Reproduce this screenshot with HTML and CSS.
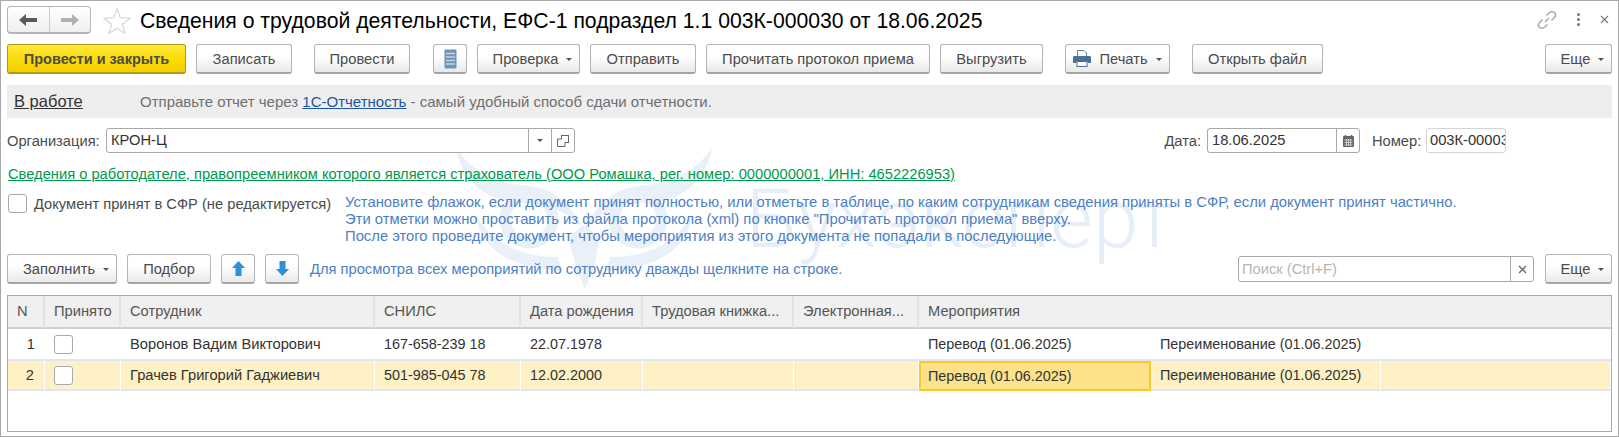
FILE: index.html
```html
<!DOCTYPE html>
<html>
<head>
<meta charset="utf-8">
<title>Сведения о трудовой деятельности</title>
<link rel="stylesheet" href="styles.css">
</head>
<body>
<div class="window">

    <!-- watermark -->
    <div class="wm">
        <svg class="wm-owl" viewBox="0 0 270 145" width="270" height="145">
            <path d="M6 3C12 36 36 58 76 58C98 58 116 66 133 84C118 52 98 42 72 40C44 38 22 26 6 3Z"/>
            <path d="M262 3C256 36 232 58 192 58C170 58 152 66 135 84C150 52 170 42 196 40C224 38 246 26 262 3Z"/>
            <circle cx="79" cy="74" r="24" fill="none" stroke-width="11"/>
            <circle cx="188" cy="74" r="24" fill="none" stroke-width="11"/>
            <path d="M118 92L134 80L150 92L144 122L135 144L126 122Z"/>
            <path d="M26 70C30 104 62 124 112 126L108 112C70 112 42 98 26 70Z"/>
            <path d="M242 70C238 104 206 124 156 126L160 112C198 112 226 98 242 70Z"/>
        </svg>
        <span class="wm-text">Бухэксперт</span>
    </div>

    <div class="titlebar">
        <div class="nav">
            <span class="nav-btn">
                <svg width="18" height="12" viewBox="0 0 18 12"><path d="M0 6L7 0V4H18V8H7V12Z" fill="#5a5a5a"/></svg>
            </span>
            <span class="nav-btn">
                <svg width="18" height="12" viewBox="0 0 18 12"><path d="M18 6L11 0V4H0V8H11V12Z" fill="#b0b0b0"/></svg>
            </span>
        </div>
        <svg class="star" width="28" height="26" viewBox="0 0 28 26"><path d="M14 1L17.4 9.7L27 10.2L19.5 16.2L22 25.3L14 20.2L6 25.3L8.5 16.2L1 10.2L10.6 9.7Z" fill="#fff" stroke="#d6d6d6" stroke-width="1.2"/></svg>
        <h1 class="title">Сведения о трудовой деятельности, ЕФС-1 подраздел 1.1 003К-000030 от 18.06.2025</h1>
        <div class="win-tools">
            <svg width="20" height="20" viewBox="0 0 20 20" fill="none" stroke="#a8a8a8" stroke-width="1.5"><path d="M8 12L12 8"/><path d="M9.5 5.5L12 3C14 1.2 16.5 1.5 17.8 3S18.8 6.200 17 8L14.500 10.500"/><path d="M10.500 14.500L8 17C6 18.800 3.500 18.500 2.200 17S1.200 13.800 3 12L5.500 9.500"/></svg>
            <span class="kebab"><i></i><i></i><i></i></span>
            <svg width="9" height="9" viewBox="0 0 9 9" stroke="#777" stroke-width="1.100"><path d="M1 1L8 8M8 1L1 8"/></svg>
        </div>
    </div>

    <div class="toolbar">
        <a class="btn btn-main">Провести и закрыть</a>
        <a class="btn btn-save">Записать</a>
        <a class="btn btn-post">Провести</a>
        <a class="btn btn-list">
            <svg width="13" height="20" viewBox="0 0 13 20"><rect x="0.500" y="0.500" width="12" height="19" rx="1" fill="#6e93b5"/><path d="M2 4.500H11M2 8H11M2 11.500H11M2 15H11" stroke="#c4d8e8" stroke-width="1.500"/></svg>
        </a>
        <a class="btn btn-check">Проверка<i class="caret"></i></a>
        <a class="btn btn-send">Отправить</a>
        <a class="btn btn-read">Прочитать протокол приема</a>
        <a class="btn btn-upload">Выгрузить</a>
        <a class="btn btn-print">
            <svg width="18" height="17" viewBox="0 0 18 17"><path d="M4.500 6V.5H11L13.500 3V6" fill="#fff" stroke="#6b7f93"/><path d="M0 7.500C0 6.500 .8 6 1.500 6H16.500C17.200 6 18 6.500 18 7.500V13H14.500V11H3.500V13H0Z" fill="#4d7096"/><rect x="4" y="11.500" width="10" height="5" fill="#fff" stroke="#4d7096"/></svg>
            Печать<i class="caret"></i>
        </a>
        <a class="btn btn-open">Открыть файл</a>
        <a class="btn btn-more">Еще<i class="caret"></i></a>
    </div>

    <div class="band">
        <a class="status">В работе</a>
        <span class="promo">Отправьте отчет через <a class="promo-link">1С-Отчетность</a> - самый удобный способ сдачи отчетности.</span>
    </div>

    <div class="org-row">
        <label class="lbl lbl-org">Организация:</label>
        <div class="field field-org">
            <span class="field-val">КРОН-Ц</span>
            <span class="field-btn"><i class="caret"></i></span>
            <span class="field-btn">
                <svg width="12" height="12" viewBox="0 0 12 12" fill="#fff" stroke="#666"><rect x="4.500" y="0.500" width="7" height="7"/><path d="M4.500 4H0.500V11.500H8V7.500"/></svg>
            </span>
        </div>
        <label class="lbl lbl-date">Дата:</label>
        <div class="field field-date">
            <span class="field-val">18.06.2025</span>
            <span class="field-btn">
                <svg width="11" height="12" viewBox="0 0 11 12"><rect y="1" width="11" height="11" rx="1" fill="#666"/><path d="M2.500 0V2M8.500 0V2" stroke="#666" stroke-width="1.500"/><path d="M1.500 5H9.500M1.500 7.500H9.500M1.500 10H9.500M3.500 4V11M5.500 4V11M7.500 4V11" stroke="#ddd" stroke-width="0.800"/></svg>
            </span>
        </div>
        <label class="lbl lbl-num">Номер:</label>
        <div class="field field-num"><span class="field-val">003К-000030</span></div>
    </div>

    <div class="employer"><a class="employer-link">Сведения о работодателе, правопреемником которого является страхователь (ООО Ромашка, рег. номер: 0000000001, ИНН: 4652226953)</a></div>

    <div class="doc-row">
        <span class="check"></span>
        <span class="doc-lbl">Документ принят в СФР (не редактируется)</span>
        <div class="hint hint-block">
            Установите флажок, если документ принят полностью, или отметьте в таблице, по каким сотрудникам сведения приняты в СФР, если документ принят частично.<br>
            Эти отметки можно проставить из файла протокола (xml) по кнопке "Прочитать протокол приема" вверху.<br>
            После этого проведите документ, чтобы мероприятия из этого документа не попадали в последующие.
        </div>
    </div>

    <div class="toolbar table-bar">
        <a class="btn btn-fill">Заполнить<i class="caret"></i></a>
        <a class="btn btn-pick">Подбор</a>
        <a class="btn btn-arrow">
            <svg width="13" height="15" viewBox="0 0 13 15"><path d="M6.500 0L13 7H9.500V15H3.500V7H0Z" fill="#2f8fd6"/></svg>
        </a>
        <a class="btn btn-arrow">
            <svg width="13" height="15" viewBox="0 0 13 15"><path d="M6.500 15L13 8H9.500V0H3.500V8H0Z" fill="#2f8fd6"/></svg>
        </a>
        <span class="hint hint-table">Для просмотра всех мероприятий по сотруднику дважды щелкните на строке.</span>
        <div class="field field-search">
            <span class="field-val placeholder">Поиск (Ctrl+F)</span>
            <span class="field-btn">
                <svg width="9" height="9" viewBox="0 0 9 9" stroke="#666" stroke-width="1.300"><path d="M1 1L8 8M8 1L1 8"/></svg>
            </span>
        </div>
        <a class="btn btn-more">Еще<i class="caret"></i></a>
    </div>

    <div class="grid">
        <div class="th">N</div>
        <div class="th">Принято</div>
        <div class="th">Сотрудник</div>
        <div class="th">СНИЛС</div>
        <div class="th">Дата рождения</div>
        <div class="th">Трудовая книжка...</div>
        <div class="th">Электронная...</div>
        <div class="th th-wide">Мероприятия</div>

        <div class="td td-n">1</div>
        <div class="td"><span class="check"></span></div>
        <div class="td">Воронов Вадим Викторович</div>
        <div class="td num">167-658-239 18</div>
        <div class="td num">22.07.1978</div>
        <div class="td"></div>
        <div class="td"></div>
        <div class="td num">Перевод (01.06.2025)</div>
        <div class="td num">Переименование (01.06.2025)</div>
        <div class="td"></div>

        <div class="td sel td-n">2</div>
        <div class="td sel"><span class="check"></span></div>
        <div class="td sel">Грачев Григорий Гаджиевич</div>
        <div class="td sel num">501-985-045 78</div>
        <div class="td sel num">12.02.2000</div>
        <div class="td sel"></div>
        <div class="td sel"></div>
        <div class="td sel num active">Перевод (01.06.2025)</div>
        <div class="td sel num">Переименование (01.06.2025)</div>
        <div class="td sel"></div>
    </div>
</div>
</body>
</html>
```

FILE: styles.css
```css
html, body{
    margin: 0;
    padding: 0;
    background: #fff;
}
*{ box-sizing: border-box; }

.window{
    position: relative;
    z-index: 0;
    width: 1619px;
    height: 437px;
    padding: 0 6px;
    border: 1px solid #a8a8a8;
    background: #fff;
    overflow: hidden;
    font-family: "Liberation Sans", Arial, sans-serif;
    font-size: 14.7px;
    color: #4b4b4b;
}

/* watermark behind the form */
.wm{
    position: absolute;
    z-index: -1;
    left: 449px;
    top: 144px;
    display: flex;
}
.wm-owl{
    fill: #e9f0f8;
    stroke: #e9f0f8;
    stroke-width: 0;
}
.wm-owl circle{ stroke-width: 11; fill: none; }
.wm-text{
    margin: 34px 0 0 26px;
    font-family: Roboto, sans-serif;
    font-weight: 300;
    font-size: 82px;
    line-height: 80px;
    color: #e6eef7;
    white-space: nowrap;
}

/* title */
.titlebar{
    display: flex;
    height: 43px;
    padding-top: 5px;
}
.nav{
    display: flex;
    width: 84px;
    height: 28px;
    border: 1px solid #b5b5b5;
    border-bottom-width: 2px;
    border-radius: 4px;
    background: linear-gradient(#fff, #efefef);
}
.nav-btn{
    flex: 1;
    display: flex;
    align-items: center;
    justify-content: center;
}
.nav-btn + .nav-btn{ border-left: 1px solid #ccc; }
.star{
    margin: 2px 0 0 12px;
}
.title{
    margin: 0 0 0 9px;
    font-size: 21.2px;
    font-weight: normal;
    line-height: 29px;
    color: #000;
    white-space: nowrap;
}
.win-tools{
    display: flex;
    align-items: center;
    height: 27px;
    margin-left: auto;
    margin-right: 3px;
    gap: 20px;
}
.kebab{
    display: flex;
    flex-direction: column;
    gap: 2px;
}
.kebab i{
    width: 3px;
    height: 3px;
    border-radius: 50%;
    background: #777;
}

/* buttons */
.toolbar{
    display: flex;
    align-items: center;
    height: 30px;
}
.btn{
    display: flex;
    align-items: center;
    justify-content: center;
    height: 30px;
    border: 1px solid #b4b4b4;
    border-bottom: 2px solid #a4a4a4;
    border-radius: 3px;
    background: linear-gradient(#fff, #fff 40%, #e9e9e9);
    color: #4b4b4b;
    white-space: nowrap;
}
.caret{
    display: inline-block;
    width: 0;
    height: 0;
    margin-left: 8px;
    margin-top: 2px;
    border-style: solid;
    border-width: 3px 3px 0 3px;
    border-color: #555 transparent transparent transparent;
}
.btn-main{
    width: 179px;
    border-color: #b09b17;
    background: linear-gradient(#ffe93f, #fbdc05 50%, #f2cf00);
    font-size: 14.5px;
    font-weight: bold;
}
.btn-save{ width: 96px; margin-left: 10px; }
.btn-post{ width: 96px; margin-left: 22px; }
.btn-list{ width: 34px; margin-left: 23px; }
.btn-check{ width: 103px; margin-left: 10px; padding-left: 8px; }
.btn-send{ width: 106px; margin-left: 10px; }
.btn-read{ width: 224px; margin-left: 10px; }
.btn-upload{ width: 103px; margin-left: 10px; }
.btn-print{ width: 105px; margin-left: 22px; gap: 8px; }
.btn-print .caret{ margin-left: 0; }
.btn-open{ width: 131px; margin-left: 22px; }
.btn-more{ width: 67px; margin-left: auto; padding-left: 8px; }
.btn-fill{ width: 110px; padding-left: 8px; }
.btn-pick{ width: 84px; margin-left: 10px; }
.btn-arrow{ width: 34px; margin-left: 10px; }

/* status band */
.band{
    display: flex;
    align-items: center;
    height: 33px;
    margin-top: 11px;
    padding-left: 7px;
    background: #eee;
}
.status{
    width: 126px;
    font-size: 16.5px;
    color: #333;
    text-decoration: underline;
}
.promo{
    font-size: 15px;
    color: #6f6f6f;
}
.promo-link{
    color: #1d56a8;
    text-decoration: underline;
}

/* fields */
.org-row{
    display: flex;
    align-items: center;
    height: 25px;
    margin-top: 10px;
}
.lbl{ white-space: nowrap; }
.lbl-org{ width: 99px; }
.lbl-date{ margin-left: auto; }
.lbl-num{ width: 47px; margin-left: 12px; }
.field{
    display: flex;
    height: 25px;
    border: 1px solid #a9a9a9;
    border-radius: 3px;
    background: #fff;
    color: #333;
}
.field-val{
    flex: 1;
    min-width: 0;
    padding-left: 4px;
    line-height: 23px;
    overflow: hidden;
    white-space: nowrap;
}
.field-btn{
    display: flex;
    align-items: center;
    justify-content: center;
    width: 23px;
    border-left: 1px solid #a9a9a9;
}
.field-btn .caret{ margin: 0; }
.field-org{ width: 469px; }
.field-date{ width: 153px; margin-left: 6px; }
.field-num{
    width: 80px;
    margin-left: 7px;
    margin-right: 106px;
    border-color: #d5d5d5;
}
.field-num .field-val{ padding-left: 3px; }
.field-search{
    width: 296px;
    height: 26px;
    margin-left: auto;
    margin-right: 11px;
}
.placeholder{ color: #b5b5b5; padding-left: 3px; line-height: 24px; }

/* green link */
.employer{
    height: 20px;
    margin-top: 11px;
    padding-left: 1px;
    line-height: 20px;
}
.employer-link{
    color: #00994d;
    text-decoration: underline;
}

/* accepted flag */
.doc-row{
    display: flex;
    height: 51px;
    margin-top: 10px;
    padding-left: 1px;
}
.check{
    display: block;
    width: 19px;
    height: 19px;
    border: 1px solid #a9a9a9;
    border-radius: 3px;
    background: #fff;
}
.doc-lbl{
    width: 311px;
    margin-left: 7px;
    line-height: 20px;
    white-space: nowrap;
}
.hint{
    color: #4c7fc4;
    white-space: nowrap;
}
.hint-block{ font-size: 14.8px; line-height: 17px; }
.table-bar{ margin-top: 9px; }
.hint-table{ margin-left: 11px; }
.table-bar .btn-more{ margin-left: 0; }

/* table */
.grid{
    display: grid;
    grid-template-columns: 37px 76px 254px 146px 122px 151px 125px 232px 230px 230px;
    grid-template-rows: 33px 32px 30px;
    height: 137px;
    margin-top: 11px;
    border: 1px solid #a9a9a9;
    background: #fff;
}
.th{
    padding-left: 9px;
    line-height: 31px;
    background: #f0f0f0;
    border-right: 2px solid #e2e2e2;
    border-bottom: 2px solid #cfcfcf;
    color: #555;
    white-space: nowrap;
}
.th-wide{
    grid-column: span 3;
    border-right: 0;
}
.td{
    display: flex;
    align-items: center;
    padding-left: 9px;
    border-bottom: 2px solid #e4e4ee;
    color: #333;
    white-space: nowrap;
}
.num{ font-size: 14.4px; }
.td-n{
    justify-content: flex-end;
    padding: 0 10px 0 0;
}
.sel{
    background: #fdf1c5;
    border-right: 1px solid #fff;
}
.active{
    padding-left: 7px;
    background: #fde28b;
    border: 2px solid #fbc926;
}
```
